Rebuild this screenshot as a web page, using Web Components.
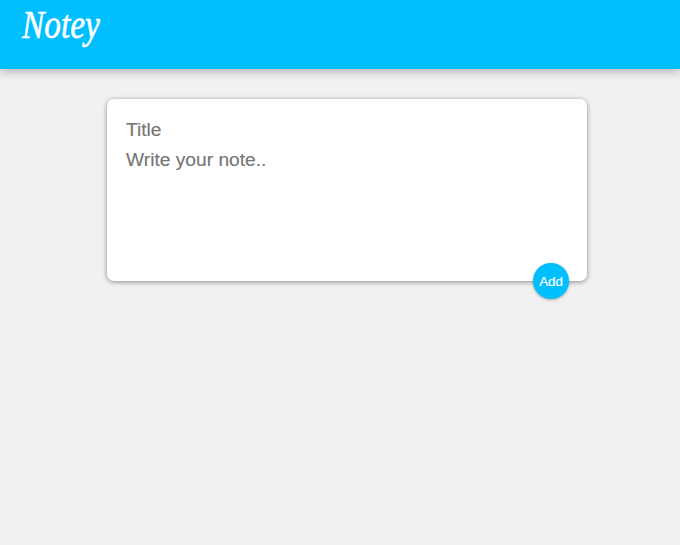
<!DOCTYPE html>
<html lang="en">
<head>
<meta charset="utf-8">
<title>Notey</title>
<style>
html { background: #f1f1f1; }
body { margin: 0; font-family: "Liberation Sans", Arial, sans-serif; }
</style>
</head>
<body>
<notey-app></notey-app>
<script>
class NoteyElement extends HTMLElement {
  constructor() {
    super();
    this.attachShadow({ mode: "open" }).innerHTML = this.constructor.markup;
  }
}
class NoteyHeader extends NoteyElement {
  static markup = `<style>
    :host { display: block; box-sizing: border-box; height: 69px; padding: 8px 22px; background: #00bfff; box-shadow: 0 2px 10px rgba(0,0,0,.3); }
    h1 { margin: 0; width: max-content; color: #fff; font: italic 400 34px/38px "Z003", "URW Chancery L", "Liberation Serif", serif; -webkit-text-stroke: .5px #fff; transform: scale(.98, 1.16); transform-origin: 0 30px; }
  </style><h1><slot></slot></h1>`;
}
class NoteyButton extends NoteyElement {
  static markup = `<style>
    :host { display: block; width: 36px; height: 36px; }
    button { display: grid; place-items: center; width: 100%; height: 100%; margin: 0; padding: 1px 0 0; border: 0; border-radius: 50%; background: #00bfff; color: #fff; font: 13.33px/15px "Liberation Sans", Arial, sans-serif; -webkit-text-stroke: .2px #fff; box-shadow: 0 1px 3px rgba(0,0,0,.3); }
  </style><button type="button"><span><slot></slot></span></button>`;
}
class NoteyEditor extends NoteyElement {
  static markup = `<style>
    :host { display: block; position: relative; box-sizing: border-box; width: 480px; height: 182px; margin: 30px 0 0 107px; padding: 20px 19px; border-radius: 7px; background: #fff; box-shadow: 0 1px 5px rgb(138,137,137); }
    p { margin: 0 0 8px; color: #757575; font-size: 19.2px; line-height: 22px; -webkit-text-stroke: .15px #757575; }
    notey-button { position: absolute; right: 18px; bottom: -18px; }
  </style><p>Title</p><p>Write your note..</p><notey-button>Add</notey-button>`;
}
class NoteyApp extends NoteyElement {
  static markup = `<style>:host { display: flex; flex-direction: column; min-height: 545px; background: #f1f1f1; }</style>
  <notey-header>Notey</notey-header><notey-editor></notey-editor>`;
}
customElements.define("notey-header", NoteyHeader);
customElements.define("notey-button", NoteyButton);
customElements.define("notey-editor", NoteyEditor);
customElements.define("notey-app", NoteyApp);
</script>
</body>
</html>
